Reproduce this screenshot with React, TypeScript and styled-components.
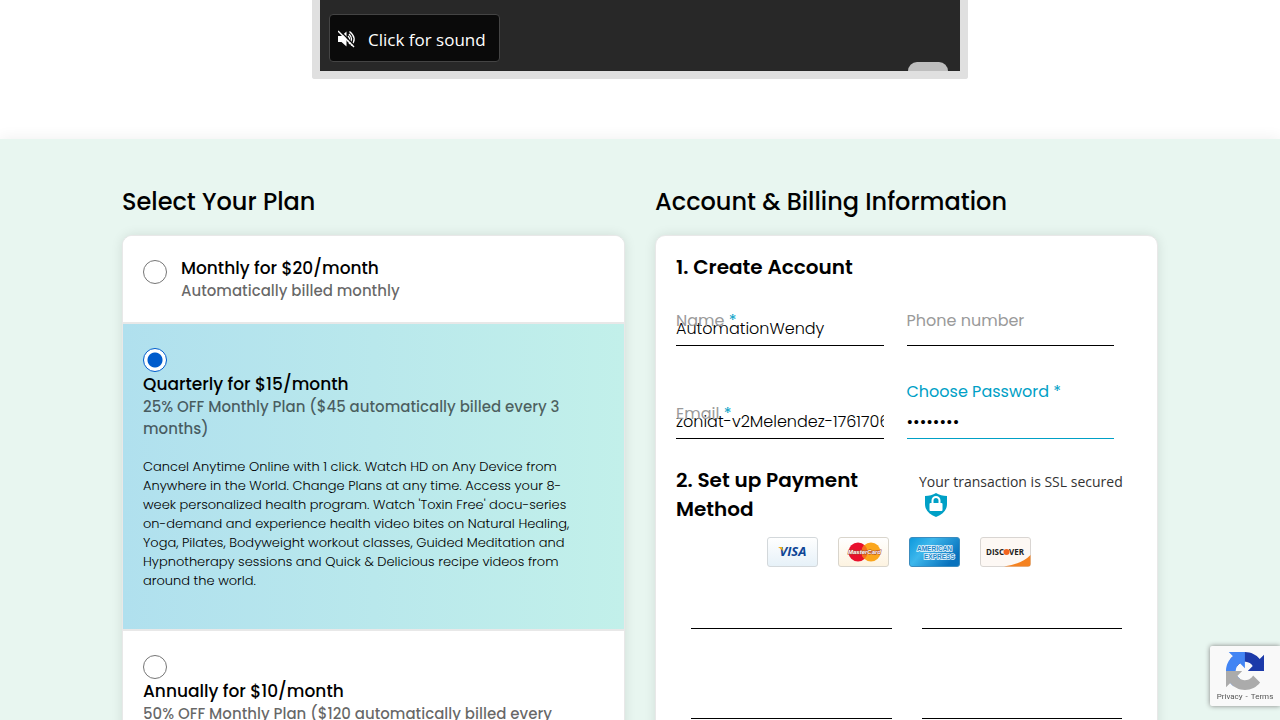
import React from "react";
import styled, { createGlobalStyle } from "styled-components";

const GlobalStyle = createGlobalStyle`
  * { box-sizing: border-box; }
  html { scrollbar-width: none; }
  body { margin: 0; background: #fff; }
  body, button, input { font-family: Poppins, Inter, "Open Sans", sans-serif; }
  h2, h3, p { margin: 0; }
`;

const Page = styled.main`
  color: #000;
`;

const VideoSection = styled.section`
  padding: 0 16px 60px;
`;

const VideoFrame = styled.div`
  max-width: 656px;
  margin: 0 auto;
  border: 8px solid #e0e0e0;
  border-top: 0;
  border-radius: 0 0 3px 3px;
  background: #282828;
`;

const VideoStage = styled.div`
  display: flex;
  justify-content: space-between;
  align-items: flex-start;
  padding: 14px 12px 9px 9px;
`;

const SoundButton = styled.button`
  display: flex;
  align-items: center;
  gap: 12px;
  height: 48px;
  padding: 2px 13px 0 8px;
  border: 1px solid #444;
  border-radius: 4px;
  background: #0a0a0a;
  color: #fff;
  font-family: "Open Sans", "Noto Sans", sans-serif;
  font-size: 17px;
`;

const PlayerTab = styled.span`
  align-self: flex-end;
  width: 40px;
  height: 9px;
  margin-bottom: -9px;
  border-radius: 9px 9px 0 0;
  background: #bebebe;
`;

const PlansSection = styled.section`
  padding: 47px 16px 40px;
  background: #e8f6f0;
  box-shadow: 0 0 15px rgba(0, 0, 0, 0.07);
`;

const Columns = styled.div`
  display: grid;
  grid-template-columns: 1fr 1fr;
  gap: 30px;
  max-width: 1036px;
  margin: 0 auto;
`;

const ColumnTitle = styled.h2`
  margin-bottom: 17px;
  font-size: 24px;
  font-weight: 500;
  line-height: 32px;
`;

const Card = styled.div`
  overflow: hidden;
  border: 1px solid #e8e8e8;
  border-radius: 10px;
  background: #fff;
  box-shadow: 0 0 12px rgba(0, 0, 0, 0.1);
`;

const Plan = styled.div<{ $active?: boolean }>`
  padding: 20px 34px 20px 20px;
  border-bottom: 2px solid #e8e8e8;
  background: ${(p) => (p.$active ? "linear-gradient(90deg, #b0e0ee, #c2f0ea)" : "#fff")};
`;

const PlanLabel = styled.label`
  display: flex;
  flex-wrap: wrap;
  column-gap: 14px;
`;

const Radio = styled.input`
  appearance: none;
  width: 24px;
  height: 24px;
  margin: 4px 0 0;
  border: 1px solid #767676;
  border-radius: 50%;
  background: #fff;
  &:checked {
    border-color: #005ccc;
    background: radial-gradient(circle, #005ccc 7px, #fff 8px);
  }
`;

const PlanText = styled.span`
  display: block;
`;

const PlanName = styled.span`
  display: block;
  font-size: 17px;
  font-weight: 500;
  line-height: 24px;
`;

const PlanTerms = styled.span`
  display: block;
  color: rgba(0, 0, 0, 0.6);
  font-size: 15px;
  font-weight: 500;
  line-height: 22px;
`;

const PlanDetails = styled.p`
  margin: 17px 0 19px;
  font-size: 13px;
  font-weight: 300;
  line-height: 19px;
`;

const FormCard = styled(Card)`
  padding: 17px 20px 40px;
`;

const StepTitle = styled.h3`
  font-size: 20px;
  font-weight: 600;
  line-height: 29px;
`;

const FieldGrid = styled.div`
  display: grid;
  grid-template-columns: 1fr 1fr;
  gap: 29px 23px;
  padding-right: 23px;
`;

const Field = styled.div`
  position: relative;
  padding-top: 29px;
`;

const FieldLabel = styled.label<{ $raised?: boolean }>`
  position: absolute;
  top: ${(p) => (p.$raised ? "5px" : "27px")};
  left: 0;
  color: ${(p) => (p.$raised ? "#00a0c6" : "#9a9a9a")};
  font-size: 16px;
  line-height: 24px;
  pointer-events: none;
`;

const Required = styled.span`
  color: #00a0c6;
`;

const TextInput = styled.input<{ $accent?: boolean }>`
  display: block;
  width: 100%;
  height: 35px;
  padding: 0;
  border: 0;
  border-bottom: 1px solid ${(p) => (p.$accent ? "#00a0c6" : "#000")};
  border-radius: 0;
  outline: 0;
  background: transparent;
  font-size: 16px;
  font-weight: ${(p) => (p.$accent ? 400 : 300)};
`;

const PaymentHeader = styled.div`
  display: grid;
  grid-template-columns: 1fr 1fr;
  column-gap: 23px;
  padding-top: 27px;
`;

const SecureNote = styled.div`
  padding: 6px 0 0 1px;
  color: #333;
  font-family: "Open Sans", "Noto Sans", sans-serif;
  font-size: 14px;
  line-height: 20px;
  white-space: nowrap;
  svg { display: block; margin-left: 5px; }
`;

const CardBrands = styled.div`
  display: flex;
  justify-content: center;
  gap: 20px;
  margin-top: 13px;
  padding-right: 16px;
  svg { display: block; }
`;

const CardFields = styled.div`
  display: grid;
  grid-template-columns: 1fr 1fr;
  gap: 55px 30px;
  padding: 27px 15px 0;
`;

const Recaptcha = styled.aside`
  position: fixed;
  right: 0;
  bottom: 14px;
  display: flex;
  flex-direction: column;
  align-items: center;
  width: 70px;
  height: 60px;
  padding-top: 6px;
  border-radius: 2px 0 0 2px;
  background: #f9f9f9;
  box-shadow: 0 0 5px gray;
`;

const RecaptchaLinks = styled.div`
  display: flex;
  gap: 3px;
  color: #555;
  font-family: Roboto, sans-serif;
  font-size: 8px;
  line-height: 14px;
  a { color: inherit; text-decoration: none; }
`;

const MutedIcon = () => (
  <svg width="18" height="18" viewBox="0 0 18 18" fill="none" aria-hidden="true">
    <path d="M0 6h3.500l5-4.500v15l-5-4.500H0z" fill="#fff" />
    <path d="M10 6q3 3 0 6M11 4q5 5 0 10M11.500 1.500q8.500 7 1.500 14" stroke="#fff" strokeWidth="1.300" />
    <path d="M1 0l16 16" stroke="#0a0a0a" strokeWidth="1.500" />
    <path d="M0 1l16 16" stroke="#fff" strokeWidth="1.500" />
  </svg>
);

const ShieldIcon = () => (
  <svg width="24" height="26" viewBox="0 0 24 26" aria-hidden="true">
    <path d="M12 1C9 3 5 4 1 4v8c0 6 4 10.500 11 13 7-2.500 11-7 11-13V4C19 4 15 3 12 1z" fill="#00a0c6" />
    <path d="M8.500 12V8.500a3.500 3.500 0 0 1 7 0V12" fill="none" stroke="#fff" strokeWidth="2" />
    <rect x="5.500" y="11" width="13" height="8" rx="1" fill="#fff" />
  </svg>
);

const VisaCard = () => (
  <svg width="51" height="30" viewBox="0 0 51 30" role="img" aria-label="Visa">
    <defs>
      <linearGradient id="visa" x2="0" y2="1"><stop stopColor="#fff" /><stop offset="1" stopColor="#e6f1f8" /></linearGradient>
    </defs>
    <rect x=".5" y=".5" width="50" height="29" rx="2.500" fill="url(#visa)" stroke="#d3d8db" />
    <text x="26" y="19" textAnchor="middle" fill="#0e4595" fontFamily="Open Sans" fontSize="13" fontWeight="700" fontStyle="italic">VISA</text>
    <path d="M11 10h4l1.500 4.500-2-2z" fill="#f2ae14" />
  </svg>
);

const MasterCard = () => (
  <svg width="51" height="30" viewBox="0 0 51 30" role="img" aria-label="MasterCard">
    <defs>
      <linearGradient id="mc" x2="0" y2="1"><stop stopColor="#fff" /><stop offset="1" stopColor="#fdf3e0" /></linearGradient>
    </defs>
    <rect x=".5" y=".5" width="50" height="29" rx="2.500" fill="url(#mc)" stroke="#d9d5cc" />
    <circle cx="20" cy="15" r="9.500" fill="#e9102c" />
    <circle cx="33" cy="15" r="9.500" fill="#fba61c" />
    <path d="M26.500 8a9.500 9.500 0 0 1 0 14 9.500 9.500 0 0 1 0-14z" fill="#f4701f" />
    <text x="26.500" y="17" textAnchor="middle" fill="#fff" stroke="#a8452c" strokeWidth="1" paintOrder="stroke" fontFamily="Liberation Sans" fontSize="6" fontWeight="700" fontStyle="italic">MasterCard</text>
  </svg>
);

const AmexCard = () => (
  <svg width="51" height="30" viewBox="0 0 51 30" role="img" aria-label="American Express">
    <defs>
      <linearGradient id="amex" x2="1" y2=".5"><stop stopColor="#0c98dc" /><stop offset=".4" stopColor="#3db7ec" /><stop offset="1" stopColor="#0872bd" /></linearGradient>
    </defs>
    <rect x=".5" y=".5" width="50" height="29" rx="2.500" fill="url(#amex)" stroke="#3c8cbe" />
    <g fill="#1b86c9" stroke="#e6f6fd" strokeWidth="1.600" paintOrder="stroke" fontFamily="Liberation Sans" fontSize="6.500" fontWeight="700">
      <text x="8" y="14">AMERICAN</text>
      <text x="15" y="22">EXPRESS</text>
    </g>
  </svg>
);

const DiscoverCard = () => (
  <svg width="51" height="30" viewBox="0 0 51 30" role="img" aria-label="Discover">
    <rect x=".5" y=".5" width="50" height="29" rx="2.500" fill="#fdf8f4" stroke="#d9d5d2" />
    <path d="M24 29.500Q42 27 50.500 18v9q0 2.500-2.500 2.500z" fill="#f58220" />
    <g fill="#222" fontFamily="Open Sans" fontSize="8" fontWeight="700">
      <text x="6" y="18">DISC</text>
      <text x="29" y="18">VER</text>
    </g>
    <circle cx="26.500" cy="15" r="3" fill="#f2641f" />
  </svg>
);

const RecaptchaLogo = () => (
  <svg width="38" height="38" viewBox="0 0 64 64" aria-hidden="true">
    <path fill="#1c3aa9" d="M64 31.955l-.033-1.370V4.687l-7.160 7.160C50.948 4.674 42.033.093 32.050.093c-10.400 0-19.622 4.960-25.458 12.640l11.736 11.860a15.550 15.550 0 0 1 4.754-5.334c2.050-1.600 4.952-2.906 8.968-2.906.485 0 .860.057 1.135.163 4.976.393 9.288 3.140 11.828 7.124l-8.307 8.307L64 31.953" />
    <path fill="#4285f4" d="M31.862.094l-1.370.033H4.594l7.160 7.160C4.580 13.147 0 22.060 0 32.046c0 10.400 4.960 19.622 12.640 25.458L24.500 45.768a15.550 15.550 0 0 1-5.334-4.754c-1.600-2.050-2.906-4.952-2.906-8.968 0-.485.057-.860.163-1.135.393-4.976 3.140-9.288 7.124-11.828l8.307 8.307L31.860.095" />
    <path fill="#ababab" d="M.001 32.045l.033 1.370v25.898l7.160-7.160c5.860 7.173 14.774 11.754 24.760 11.754 10.400 0 19.622-4.960 25.458-12.640l-11.736-11.860a15.550 15.550 0 0 1-4.754 5.334c-2.050 1.600-4.952 2.906-8.968 2.906-.485 0-.860-.057-1.135-.163-4.976-.393-9.288-3.140-11.828-7.124l8.307-8.307c-10.522.040-22.400.066-27.295-.005" />
  </svg>
);

const plans = [
  { id: "monthly", name: "Monthly for $20/month", terms: "Automatically billed monthly" },
  {
    id: "quarterly",
    name: "Quarterly for $15/month",
    terms: "25% OFF Monthly Plan ($45 automatically billed every 3 months)",
    details:
      "Cancel Anytime Online with 1 click. Watch HD on Any Device from Anywhere in the World. Change Plans at any time. Access your 8-week personalized health program. Watch 'Toxin Free' docu-series on-demand and experience health video bites on Natural Healing, Yoga, Pilates, Bodyweight workout classes, Guided Meditation and Hypnotherapy sessions and Quick & Delicious recipe videos from around the world.",
  },
  {
    id: "annual",
    name: "Annually for $10/month",
    terms: "50% OFF Monthly Plan ($120 automatically billed every year)",
  },
];

export default function App() {
  const [selected, setSelected] = React.useState("quarterly");
  return (
    <Page>
      <GlobalStyle />
      <VideoSection>
        <VideoFrame>
          <VideoStage>
            <SoundButton type="button">
              <MutedIcon />
              Click for sound
            </SoundButton>
            <PlayerTab />
          </VideoStage>
        </VideoFrame>
      </VideoSection>
      <PlansSection>
        <Columns>
          <div>
            <ColumnTitle>Select Your Plan</ColumnTitle>
            <Card>
              {plans.map((plan) => (
                <Plan key={plan.id} $active={plan.id === selected}>
                  <PlanLabel>
                    <Radio
                      type="radio"
                      name="plan"
                      checked={plan.id === selected}
                      onChange={() => setSelected(plan.id)}
                    />
                    <PlanText>
                      <PlanName>{plan.name}</PlanName>
                      <PlanTerms>{plan.terms}</PlanTerms>
                    </PlanText>
                  </PlanLabel>
                  {plan.details && <PlanDetails>{plan.details}</PlanDetails>}
                </Plan>
              ))}
            </Card>
          </div>
          <div>
            <ColumnTitle>Account &amp; Billing Information</ColumnTitle>
            <FormCard as="form">
              <StepTitle>1. Create Account</StepTitle>
              <FieldGrid>
                <Field>
                  <TextInput id="name" type="text" defaultValue="AutomationWendy" />
                  <FieldLabel htmlFor="name">Name <Required>*</Required></FieldLabel>
                </Field>
                <Field>
                  <TextInput id="phone" type="tel" />
                  <FieldLabel htmlFor="phone">Phone number</FieldLabel>
                </Field>
                <Field>
                  <TextInput id="email" type="text" defaultValue="zoniat-v2Melendez-1761706" />
                  <FieldLabel htmlFor="email">Email <Required>*</Required></FieldLabel>
                </Field>
                <Field>
                  <TextInput id="password" type="password" defaultValue="password" $accent />
                  <FieldLabel htmlFor="password" $raised>Choose Password *</FieldLabel>
                </Field>
              </FieldGrid>
              <PaymentHeader>
                <StepTitle>2. Set up Payment Method</StepTitle>
                <SecureNote>
                  Your transaction is SSL secured
                  <ShieldIcon />
                </SecureNote>
              </PaymentHeader>
              <CardBrands>
                <VisaCard />
                <MasterCard />
                <AmexCard />
                <DiscoverCard />
              </CardBrands>
              <CardFields>
                <TextInput aria-label="Card number" />
                <TextInput aria-label="Expiry date" />
                <TextInput aria-label="Security code" />
                <TextInput aria-label="Postal code" />
              </CardFields>
            </FormCard>
          </div>
        </Columns>
      </PlansSection>
      <Recaptcha>
        <RecaptchaLogo />
        <RecaptchaLinks>
          <a href="#privacy">Privacy</a>
          <span>-</span>
          <a href="#terms">Terms</a>
        </RecaptchaLinks>
      </Recaptcha>
    </Page>
  );
}
